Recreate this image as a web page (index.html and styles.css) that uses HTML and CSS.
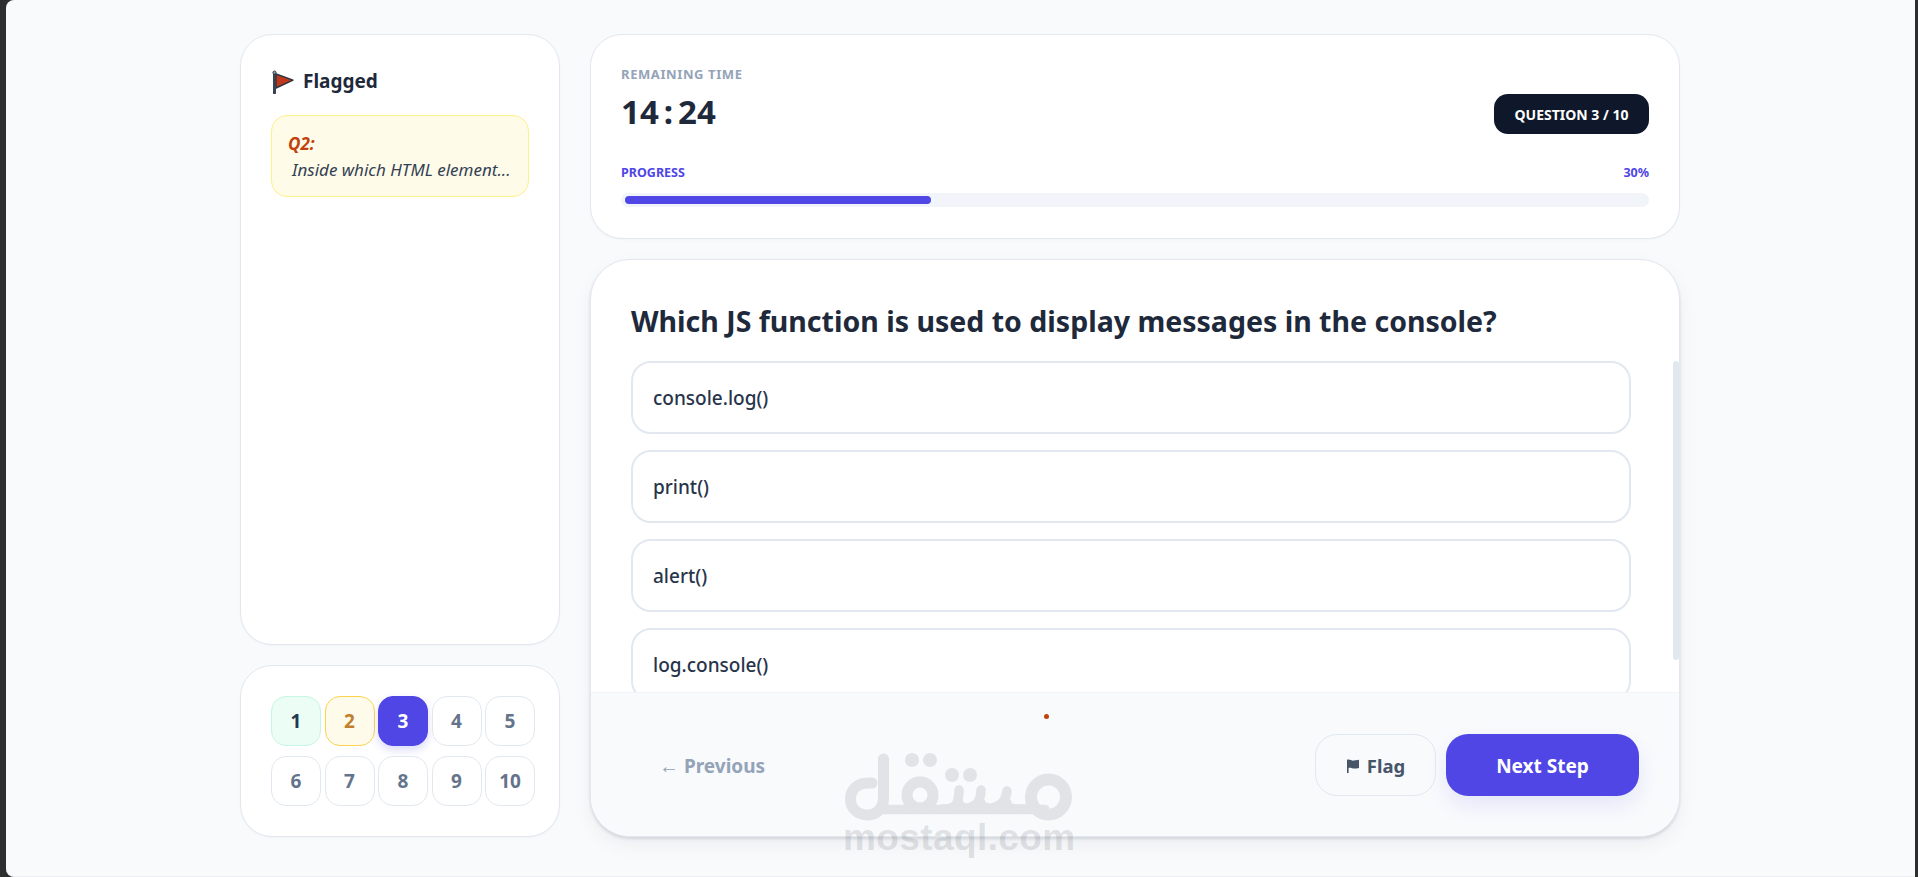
FILE: index.html
```html
<!DOCTYPE html>
<html lang="en">
<head>
<meta charset="utf-8">
<title>Quiz</title>
<link rel="stylesheet" href="styles.css">
</head>
<body>
<div class="app">
  <div class="layout">
    <aside class="side">
      <section class="card flagged">
        <h2 class="flagged-title">
          <svg class="flag-emoji" width="24" height="24" viewBox="0 0 24 24" aria-hidden="true">
            <path d="M5 4 L22 10.2 L5 18 Z" fill="#c0391a" stroke="#2b3445" stroke-width="1.4" stroke-linejoin="round"/>
            <path d="M3.5 3.5 V23" stroke="#39424f" stroke-width="3" stroke-linecap="round"/>
            <circle cx="3.5" cy="2.6" r="1.6" fill="#8f98a5" stroke="#2b3445" stroke-width=".9"/>
          </svg>
          <span>Flagged</span>
        </h2>
        <div class="note">
          <strong class="note-id">Q2:</strong>
          <p class="note-text">Inside which HTML element...</p>
        </div>
      </section>
      <nav class="card pager">
        <button class="page page-done">1</button>
        <button class="page page-flag">2</button>
        <button class="page page-now">3</button>
        <button class="page">4</button>
        <button class="page">5</button>
        <button class="page">6</button>
        <button class="page">7</button>
        <button class="page">8</button>
        <button class="page">9</button>
        <button class="page">10</button>
      </nav>
    </aside>
    <main class="content">
      <section class="card status">
        <div class="status-head">
          <div>
            <div class="time-label">REMAINING TIME</div>
            <div class="time">14<span class="colon">:</span>24</div>
          </div>
          <div class="badge">QUESTION 3 / 10</div>
        </div>
        <div class="progress-row"><span>PROGRESS</span><span>30%</span></div>
        <div class="track"><div class="fill" style="width:30%"></div></div>
      </section>
      <section class="card quiz">
        <h1 class="question">Which JS function is used to display messages in the console?</h1>
        <div class="options">
          <div class="option">console.log()</div>
          <div class="option">print()</div>
          <div class="option">alert()</div>
          <div class="option">log.console()</div>
        </div>
        <span class="scroll-thumb"></span>
        <footer class="actions">
          <span class="dot"></span>
          <button class="btn-prev"><span class="arrow">←</span> Previous</button>
          <div class="actions-right">
            <button class="btn-flag">
              <svg width="14" height="14" viewBox="0 0 14 14" aria-hidden="true"><path d="M1 .8 C3.5 -.2 5.5 2 8 1.6 C9.6 1.4 11 1 13 .8 V9 C10 9.6 8 9.8 6 9.2 C4.6 8.8 3.2 8.6 2.6 9 V14 H1 Z" fill="#475569"/></svg>
              <span>Flag</span>
            </button>
            <button class="btn-next">Next Step</button>
          </div>
        </footer>
      </section>
    </main>
  </div>
  <div class="watermark" aria-hidden="true">
    <svg class="wm-logo" width="250" height="76" viewBox="0 0 250 76">
      <g fill="none" stroke="#e1e3e6" stroke-linecap="round" stroke-linejoin="round">
        <path stroke-width="11" d="M37 38 H33 C22 38 15.500 45 15.500 54 C15.500 63 22 70 33 70 C42 70 48.500 62 48.500 54 V14"/>
        <path stroke-width="9.500" d="M48 64.500 H210"/>
        <circle stroke-width="11" cx="85" cy="50" r="13"/>
        <path stroke-width="9.500" d="M108 64 C118 64 124 62 124 45 M124 58 C125 66 146 66 146 45 M146 58 C147 66 170 66 172 46 M172 58 C172 64 180 64 190 64"/>
        <circle stroke-width="12" cx="213.500" cy="52" r="17.500"/>
      </g>
      <g fill="#e1e3e6">
        <circle cx="77" cy="15" r="7"/><circle cx="95" cy="15" r="7"/>
        <circle cx="117" cy="30" r="7"/><circle cx="135" cy="30" r="7"/>
      </g>
    </svg>
    <div class="wm-text">mostaql.com</div>
  </div>
</div>
</body>
</html>
```
FILE: styles.css
```css
* { box-sizing: border-box; }
html, body { margin: 0; height: 100%; overflow: hidden; }
body {
  background: #2e2e2e;
  padding: 0 3px 0 6px;
  font-family: "Noto Sans", "Open Sans", sans-serif;
  color: #1e293b;
}
button { font-family: inherit; cursor: pointer; }
.app {
  position: relative;
  height: 877px;
  background: #f8fafc;
  border-radius: 8px 0 0 8px;
  border-bottom: 1px solid #eceef1;
  padding: 34px 1px 0 0;
  display: flex;
  justify-content: center;
}
.layout {
  width: 1440px;
  height: 803px;
  display: grid;
  grid-template-columns: 320px 1fr;
  gap: 30px;
}
.side, .content {
  display: flex;
  flex-direction: column;
  gap: 20px;
  min-height: 0;
}
.card {
  background: #fff;
  border: 1px solid #e2e8f0;
  border-radius: 32px;
  box-shadow: 0 1px 2px rgba(15, 23, 42, .03);
}
.flagged {
  flex: 1;
  padding: 30px;
}
.flagged-title {
  margin: 0 0 18px;
  height: 32px;
  display: flex;
  align-items: center;
  gap: 8px;
  font-size: 19px;
  font-weight: 700;
  line-height: 32px;
  color: #1e293b;
}
.flag-emoji { flex: none; margin-top: 1px; }
.note {
  height: 82px;
  padding: 15px 16px;
  background: #fefce8;
  border: 1px solid #fef08a;
  border-radius: 16px;
  font-style: italic;
  font-size: 17px;
  line-height: 25px;
}
.note-id { display: block; color: #c2410c; font-weight: 700; }
.note-text { margin: 1px 0 0 4px; color: #334155; white-space: nowrap; }
.pager {
  padding: 30px;
  display: grid;
  grid-template-columns: repeat(5, 50px);
  grid-auto-rows: 50px;
  column-gap: 3.500px;
  row-gap: 10px;
  flex: none;
}
.page {
  padding: 0;
  background: #fff;
  border: 1px solid #e2e8f0;
  border-radius: 15px;
  color: #64748b;
  font-size: 19px;
  font-weight: 700;
}
.page-done { background: #ecfdf5; border-color: #c6f6e6; color: #1e3a52; }
.page-flag { background: #fffbeb; border-color: #fcd34d; color: #c2802f; }
.page-now { background: #4f46e5; border-color: #4f46e5; color: #fff; box-shadow: 0 4px 8px rgba(79, 70, 229, .2); }
.status {
  flex: none;
  padding: 30px 30px 31px;
}
.status-head {
  display: flex;
  justify-content: space-between;
  align-items: flex-end;
}
.time-label {
  height: 18px;
  margin-bottom: 7px;
  font-size: 13px;
  line-height: 18px;
  font-weight: 700;
  letter-spacing: .6px;
  color: #94a3b8;
}
.time {
  height: 44px;
  font-size: 33px;
  line-height: 44px;
  font-weight: 700;
  color: #1e293b;
}
.colon { margin: 0 5px; }
.badge {
  width: 155px;
  height: 40px;
  background: #0f172a;
  border-radius: 14px;
  color: #fff;
  font-size: 14px;
  font-weight: 700;
  text-align: center;
  line-height: 41px;
}
.progress-row {
  margin-top: 31px;
  margin-bottom: 12px;
  height: 16px;
  display: flex;
  justify-content: space-between;
  font-size: 12.500px;
  line-height: 16px;
  font-weight: 700;
  color: #4f46e5;
}
.track {
  height: 14px;
  padding: 3px 4px;
  background: #f1f5f9;
  border-radius: 7px;
}
.fill {
  height: 8px;
  background: #4f46e5;
  border-radius: 4px;
}
.quiz {
  position: relative;
  flex: 1;
  min-height: 0;
  display: flex;
  flex-direction: column;
  overflow: hidden;
  border-radius: 40px;
  box-shadow: 0 2px 3px rgba(15, 23, 42, .12), 0 8px 20px rgba(15, 23, 42, .05);
}
.question {
  flex: none;
  margin: 0;
  padding: 40px 40px 19px;
  font-size: 28.500px;
  line-height: 42px;
  font-weight: 700;
  color: #1e293b;
  white-space: nowrap;
}
.options {
  flex: 1;
  min-height: 0;
  overflow: hidden;
  padding: 0 48px 30px 40px;
  display: flex;
  flex-direction: column;
  gap: 16px;
}
.scroll-thumb {
  position: absolute;
  top: 101px;
  right: 0;
  width: 6px;
  height: 299px;
  background: #e2e8f0;
  border-radius: 3px;
}
.option {
  flex: none;
  height: 73px;
  padding: 0 20px;
  display: flex;
  align-items: center;
  background: #fff;
  border: 2px solid #e2e8f0;
  border-radius: 20px;
  font-size: 19px;
  font-weight: 500;
  color: #27344a;
}
.actions {
  position: relative;
  flex: none;
  height: 144px;
  padding: 0 40px;
  background: #f8fafc;
  border-top: 1px solid #f1f5f9;
  display: flex;
  justify-content: space-between;
  align-items: center;
}
.dot {
  position: absolute;
  left: 453px;
  top: 21px;
  width: 5px;
  height: 5px;
  border-radius: 50%;
  background: #c2410c;
}
.actions-right { display: flex; gap: 10px; }
.btn-prev {
  padding: 2px 28px 0;
  height: 62px;
  background: none;
  border: 0;
  color: #94a3b8;
  font-size: 19px;
  font-weight: 700;
}
.arrow { font-weight: 400; font-size: 20px; }
.btn-flag {
  width: 121px;
  height: 62px;
  padding-top: 3px;
  display: flex;
  align-items: center;
  justify-content: center;
  gap: 7px;
  background: transparent;
  border: 1px solid #e2e8f0;
  border-radius: 22px;
  color: #475569;
  font-size: 18.500px;
  font-weight: 700;
}
.btn-next {
  width: 193px;
  height: 62px;
  padding-top: 3px;
  background: #4f46e5;
  border: 0;
  border-radius: 22px;
  color: #fff;
  font-size: 19px;
  font-weight: 700;
  box-shadow: 0 10px 20px rgba(79, 70, 229, .1);
}
.watermark {
  position: absolute;
  left: 829px;
  top: 745px;
  width: 250px;
  pointer-events: none;
}
.wm-logo { display: block; }
.wm-text {
  margin: -2px 0 0 8px;
  font-family: "Liberation Sans", sans-serif;
  font-weight: 700;
  font-size: 37px;
  line-height: 38px;
  letter-spacing: .4px;
  color: rgba(90, 95, 105, .17);
  white-space: nowrap;
}
```
